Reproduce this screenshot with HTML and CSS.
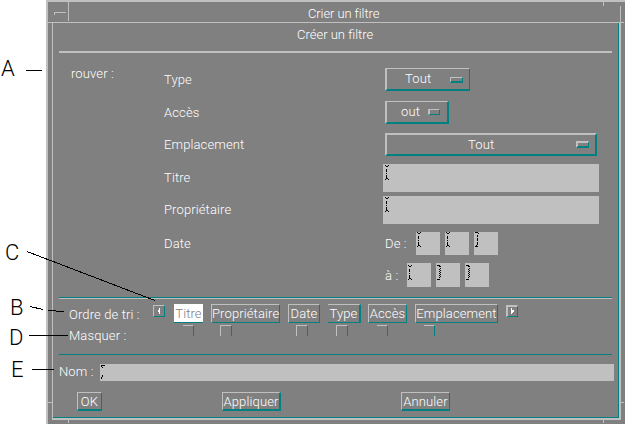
FILE: index.html
```
<!DOCTYPE html>
<html lang="fr">
<head>
<meta charset="utf-8">
<title>Créer un filtre</title>
<link rel="stylesheet" href="styles.css">
</head>
<body>
<svg class="defs" width="0" height="0">
  <symbol id="ibeam" viewBox="0 0 5 15"><path d="M0 .5h1M3 .5h1M1 1.5h2M1.500 4v3M1.500 8v1M1.500 10v3M1 13.500h2M0 14.500h1M3 14.500h1"/></symbol>
  <symbol id="ibeam-cut" viewBox="0 0 5 15"><path d="M0 .5h3M3 1.500h1M2.500 3v2M2.500 6v3M2.500 10v3M1 13.500h1M0 14.500h3"/></symbol>
  <symbol id="ibeam-jag" viewBox="0 0 5 15"><path d="M0 .5h3M2 1.500h2M3 3.500h1M2 4.500h1M3 5.500h1M2 6.500h1M3 7.500h1M2 8.500h1M3 9.500h1M2 10.500h1M3 11.500h1M2 12.500h1M0 14.500h3"/></symbol>
</svg>
<main class="window">
  <header class="titlebar"><span class="menu-button"><i></i></span><h1>Crier un filtre</h1></header>
  <div class="frame">
    <h2>Créer un filtre</h2>
    <section class="form">
      <div class="row r1"><span class="find">rouver :</span><label>Type</label><button class="option o1"><span>Tout</span><i></i></button></div>
      <div class="row r2"><label>Accès</label><button class="option o2"><span>out</span><i></i></button></div>
      <div class="row r3"><label>Emplacement</label><button class="option o3"><span>Tout</span><i></i></button></div>
      <div class="row r4"><label>Titre</label><div class="field"><svg><use href="#ibeam"/></svg></div></div>
      <div class="row r5"><label>Propriétaire</label><div class="field"><svg><use href="#ibeam"/></svg></div></div>
      <div class="row r6"><label>Date</label><div class="dates"><span class="from">De :</span><div class="cell"><svg><use href="#ibeam"/></svg></div><div class="cell"><svg><use href="#ibeam"/></svg></div><div class="cell"><svg><use href="#ibeam-cut"/></svg></div></div></div>
      <div class="row r7"><label></label><div class="dates"><span class="to">à :</span><div class="cell"><svg><use href="#ibeam"/></svg></div><div class="cell"><svg><use href="#ibeam-jag"/></svg></div><div class="cell"><svg><use href="#ibeam-jag"/></svg></div></div></div>
    </section>
    <section class="sort">
      <div class="captions"><span class="c-sort">Ordre de tri :</span><span class="c-hide">Masquer :</span></div>
      <button class="arrow"><svg width="10" height="10"><path d="M6 2v6H5V6H4V4h1V2z"/></svg></button>
      <div class="col k1"><button>Titre</button><i class="check open"></i></div>
      <div class="col k2"><button>Propriétaire</button><i class="check"></i></div>
      <div class="col k3"><button>Date</button><i class="check"></i></div>
      <div class="col k4"><button>Type</button><i class="check"></i></div>
      <div class="col k5"><button>Accès</button><i class="check open"></i></div>
      <div class="col k6"><button>Emplacement</button><i class="check open"></i></div>
      <button class="arrow next"><svg width="9" height="9"><path d="M3 1v6h1V6h1V5h1V3H4V1z"/></svg></button>
    </section>
    <section class="name"><label>Nom :</label><div class="name-field"><svg><path d="M1 1.500h4M1 2.500h1M2.500 3v1M2.500 11v2M1.500 13v2"/></svg></div></section>
    <footer><button class="b1">OK</button><button class="b2">Appliquer</button><button class="b3">Annuler</button></footer>
  </div>
  <svg class="corners" width="577" height="422"><path d="M555.500 0v4M572.500 4v17M0 400.500h4M573 400.500h3M20.500 418v3M555.500 418v3"/></svg>
</main>
<div class="callouts">
  <span class="a">A</span><span class="c">C</span><span class="b">B</span><span class="d">D</span><span class="e">E</span>
  <svg width="210" height="425"><path d="M26 70.500H42M27 251.500L155 300.500M30 306.500L43 309.500M48 310.500L64 311.500M29 335.500H68M32 369.500H54"/></svg>
</div>
</body>
</html>
```

FILE: styles.css
```
* { box-sizing: border-box; }
:root { --gray: #808080; --light: #c0c0c0; --teal: #008080; }
body { margin: 0; background: #fff; color: #fff; font: 300 13px/15px Roboto, "Liberation Sans", Arial, sans-serif; letter-spacing: .12px; position: relative; }
button { background: var(--gray); border: 1px solid; border-color: var(--light) var(--teal) var(--teal) var(--light); color: #fff; font: inherit; letter-spacing: inherit; padding: 0; margin: 0; white-space: nowrap; border-radius: 0; }
h1, h2 { margin: 0; font: inherit; white-space: nowrap; }
svg, i { display: block; flex: none; }
label, span { white-space: nowrap; }
.defs { position: absolute; }

.window { position: relative; margin-left: 46px; width: 579px; height: 424px; background: var(--gray); border: solid var(--light); border-width: 2px 0 0 2px; }
.titlebar { display: flex; width: 576px; height: 21px; border-bottom: 1px solid var(--light); }
.menu-button { width: 21px; height: 19px; border-right: 1px solid var(--light); padding: 10px 0 0 6px; }
.menu-button i { width: 12px; height: 3px; border: solid var(--light); border-width: 1px 0 0 1px; }
h1 { margin: 4px 0 0 239px; letter-spacing: -.1px; }
.frame { margin-left: 4px; width: 569px; height: 397px; border-left: 1px solid var(--light); border-right: 2px solid var(--light); border-bottom: 2px solid var(--light); box-shadow: inset -1px -1px var(--teal); padding-left: 6px; }
h2 { width: 553px; height: 30px; border-bottom: 2px solid var(--light); padding: 4px 0 0 238px; letter-spacing: 0; }

.form { padding-top: 10px; height: 244px; }
.row { display: flex; align-items: center; padding-left: 105px; position: relative; }
.row > label { width: 221px; margin-top: -1px; }
.r1 { height: 33px; padding-left: 12px; }
.find { width: 93px; margin-top: -13px; }
.r2 { height: 33px; }
.r3 { height: 31px; }
.r4 { height: 36px; }
.r5 { height: 28px; }
.r6 { height: 39px; }
.r7 { height: 24px; }
.option { display: flex; align-items: center; height: 23px; border-width: 1px 1px 2px 2px; }
.option span { margin-top: -1px; text-align: left; }
.option i { border: 1px solid; border-color: inherit; }
.o1 { width: 85px; padding-left: 18px; }
.o1 span { width: 45px; }
.o1 i { width: 13px; height: 6px; border-bottom-width: 2px; margin-top: 1px; }
.o2 { width: 64px; border-right-width: 2px; padding-left: 14px; }
.o2 span { width: 27px; }
.o2 i { width: 12px; height: 6px; border-left-width: 2px; }
.o3 { width: 212px; border-width: 2px; padding-left: 81px; }
.o3 span { width: 108px; }
.o3 i { width: 13px; height: 7px; border-width: 2px 1px 2px 2px; }
.field { width: 216px; height: 28px; background: var(--light); margin-left: -2px; padding: 1px 2px; }
.field svg, .cell svg { width: 5px; height: 15px; stroke: #000; }
.dates { display: flex; align-items: center; gap: 5px; }
.from { width: 26px; }
.to { width: 17px; }
.cell { width: 24px; height: 23px; background: var(--light); padding: 0 1px; }
.r7 .cell { height: 24px; padding-top: 2px; }

.sort { width: 553px; height: 58px; display: flex; align-items: flex-start; border-top: 1px solid var(--teal); border-bottom: 1px solid var(--teal); box-shadow: inset 0 1px var(--light); padding-top: 6px; }
.captions { width: 94px; padding-left: 10px; display: flex; flex-direction: column; gap: 6px; padding-top: 3px; }
.arrow { width: 12px; height: 12px; margin-top: 1px; }
.arrow path { fill: #fff; }
.next { border-width: 2px 1px 1px 2px; margin-left: 8px; }
.col { margin-left: 8px; }
.col button { display: block; width: 100%; height: 19px; text-align: center; }
.check { width: 12px; height: 11px; border: solid; border-width: 1px 1px 0 1px; border-color: var(--light) var(--teal) var(--teal) var(--light); margin: 2px 0 0 8px; }
.open { width: 11px; border-left: 0; margin-left: 9px; }
.k1 { width: 29px; margin-left: 9px; }
.k1 button { background: #fff; color: var(--gray); border-width: 0 0 1px; }
.k2 { width: 69px; }
.k2 .check { margin-left: 9px; }
.k3 { width: 32px; }
.k4 { width: 33px; }
.k4 button { border-width: 1px 2px 1px 0; }
.k5 { width: 39px; margin-left: 7px; }
.k6 { width: 83px; }

.name { display: flex; height: 26px; padding-top: 9px; }
.name label { width: 41px; }
.name-field { width: 514px; height: 17px; background: var(--light); flex: none; }
.name-field svg { width: 6px; height: 17px; stroke: #000; }
footer { display: flex; padding: 11px 0 0 18px; }
footer button { height: 19px; border-bottom-width: 2px; text-align: center; }
.b1 { width: 25px; }
.b2 { width: 59px; border-right-width: 2px; margin-left: 120px; }
.b3 { width: 49px; margin-left: 120px; }
.corners { position: absolute; left: 0; top: 0; stroke: var(--light); }

.callouts { position: absolute; left: 0; top: 0; color: #000; font: 300 22px/22px Roboto, "Liberation Sans", sans-serif; letter-spacing: 0; }
.callouts svg { stroke: #000; fill: none; shape-rendering: crispEdges; }
.callouts path { fill: none; }
.callouts span { position: absolute; }
.a { left: 1px; top: 58px; }
.c { left: 5px; top: 242px; }
.b { left: 10px; top: 297px; }
.d { left: 9px; top: 327px; }
.e { left: 11px; top: 359px; }
```
